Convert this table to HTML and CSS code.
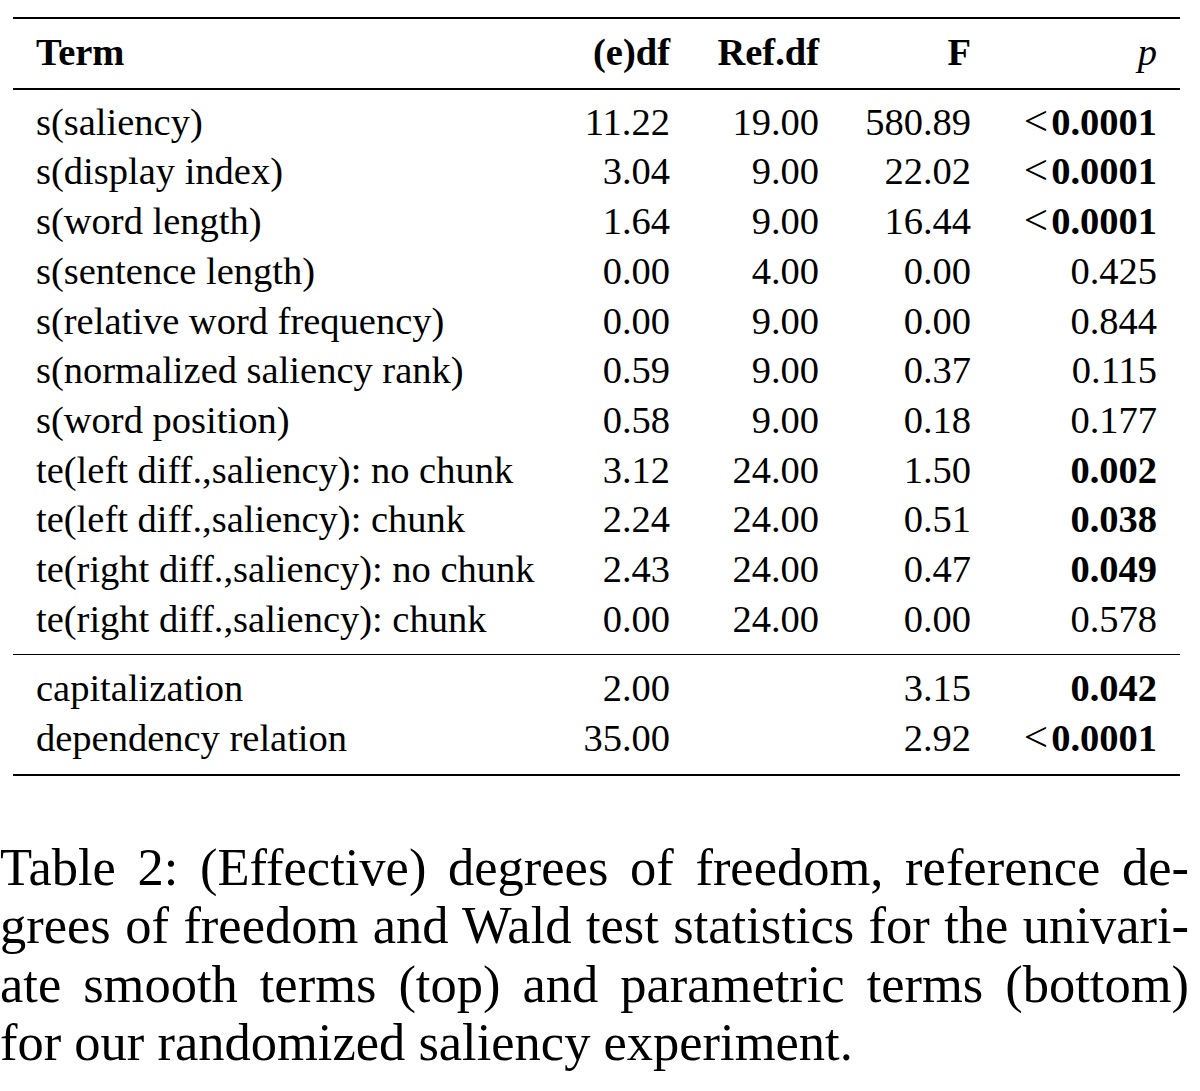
FILE: index.html
```html
<!DOCTYPE html>
<html lang="en">
<head>
<meta charset="utf-8">
<title>Table 2</title>
<link rel="stylesheet" href="styles.css">
</head>
<body>
<table class="stats">
  <colgroup>
    <col class="c-term">
    <col class="c-edf">
    <col class="c-refdf">
    <col class="c-f">
    <col class="c-p">
  </colgroup>
  <thead>
    <tr>
      <th class="left">Term</th>
      <th>(e)df</th>
      <th>Ref.df</th>
      <th>F</th>
      <th><i class="pval">p</i></th>
    </tr>
  </thead>
  <tbody class="group smooth">
    <tr><td class="left">s(saliency)</td><td>11.22</td><td>19.00</td><td>580.89</td><td><span class="lt">&lt;</span><b>0.0001</b></td></tr>
    <tr><td class="left">s(display index)</td><td>3.04</td><td>9.00</td><td>22.02</td><td><span class="lt">&lt;</span><b>0.0001</b></td></tr>
    <tr><td class="left">s(word length)</td><td>1.64</td><td>9.00</td><td>16.44</td><td><span class="lt">&lt;</span><b>0.0001</b></td></tr>
    <tr><td class="left">s(sentence length)</td><td>0.00</td><td>4.00</td><td>0.00</td><td>0.425</td></tr>
    <tr><td class="left">s(relative word frequency)</td><td>0.00</td><td>9.00</td><td>0.00</td><td>0.844</td></tr>
    <tr><td class="left">s(normalized saliency rank)</td><td>0.59</td><td>9.00</td><td>0.37</td><td>0.115</td></tr>
    <tr><td class="left">s(word position)</td><td>0.58</td><td>9.00</td><td>0.18</td><td>0.177</td></tr>
    <tr><td class="left">te(left diff.,saliency): no chunk</td><td>3.12</td><td>24.00</td><td>1.50</td><td><b>0.002</b></td></tr>
    <tr><td class="left">te(left diff.,saliency): chunk</td><td>2.24</td><td>24.00</td><td>0.51</td><td><b>0.038</b></td></tr>
    <tr><td class="left">te(right diff.,saliency): no chunk</td><td>2.43</td><td>24.00</td><td>0.47</td><td><b>0.049</b></td></tr>
    <tr><td class="left">te(right diff.,saliency): chunk</td><td>0.00</td><td>24.00</td><td>0.00</td><td>0.578</td></tr>
  </tbody>
  <tbody class="group param">
    <tr><td class="left">capitalization</td><td>2.00</td><td></td><td>3.15</td><td><b>0.042</b></td></tr>
    <tr><td class="left">dependency relation</td><td>35.00</td><td></td><td>2.92</td><td><span class="lt">&lt;</span><b>0.0001</b></td></tr>
  </tbody>
</table>

<div class="caption">
  <span class="cap-line">Table 2: (Effective) degrees of freedom, reference de-</span>
  <span class="cap-line">grees of freedom and Wald test statistics for the univari-</span>
  <span class="cap-line">ate smooth terms (top) and parametric terms (bottom)</span>
  <span class="cap-line last">for our randomized saliency experiment.</span>
</div>
</body>
</html>
```

FILE: styles.css
```css
html, body {
  margin: 0;
  padding: 0;
  background: #ffffff;
}

body {
  font-family: "Liberation Serif", "Times New Roman", Times, serif;
  color: #000000;
  padding-top: 17px;
}

.stats {
  border-collapse: separate;
  border-spacing: 0;
  table-layout: fixed;
  width: 1167px;
  margin-left: 13px;
  font-size: 38.5px;
  line-height: 49.7px;
}

.c-term { width: 547px; }
.c-edf { width: 133px; }
.c-refdf { width: 149px; }
.c-f { width: 152px; }
.c-p { width: 186px; }

.stats th,
.stats td {
  padding: 0 23px;
  text-align: right;
  white-space: nowrap;
  vertical-align: baseline;
}

.stats .left {
  text-align: left;
}

.stats th {
  font-weight: bold;
  padding-top: 9px;
  padding-bottom: 10px;
  border-top: 2px solid #000;
  border-bottom: 2px solid #000;
}

.stats .pval {
  font-weight: normal;
  font-style: italic;
}

.stats b {
  font-weight: bold;
}

.stats .lt {
  font-size: 1.12em;
  line-height: 0;
  margin-right: 3px;
}

.group tr:first-child td {
  padding-top: 8px;
}

.group tr:last-child td {
  padding-bottom: 10px;
}

.smooth tr:last-child td {
  border-bottom: 1.5px solid #000;
}

.param tr:first-child td {
  padding-top: 9px;
}

.param tr:last-child td {
  border-bottom: 2px solid #000;
}

.caption {
  width: 1189px;
  margin-top: 62px;
  font-size: 52.5px;
  line-height: 58.5px;
}

.cap-line {
  display: block;
  text-align: justify;
  text-align-last: justify;
}

.cap-line.last {
  text-align-last: left;
}
```
